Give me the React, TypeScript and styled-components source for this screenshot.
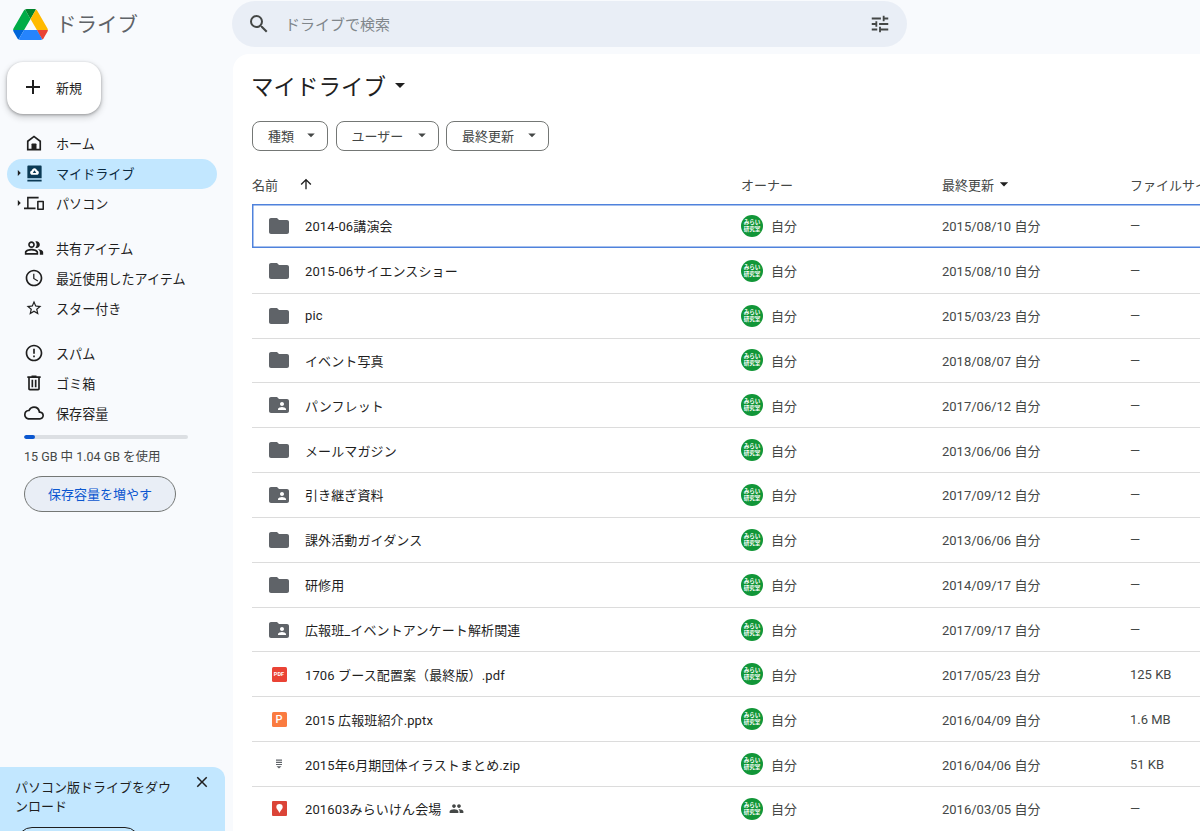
import React from "react";
import styled, { createGlobalStyle } from "styled-components";
import {
  MdAccessTime,
  MdAdd,
  MdArrowDropDown,
  MdArrowRight,
  MdArrowUpward,
  MdClose,
  MdErrorOutline,
  MdFolder,
  MdFolderShared,
  MdOutlineCloud,
  MdOutlinePeopleAlt,
  MdPeople,
  MdSearch,
  MdStarBorder,
  MdTune,
} from "react-icons/md";

const GlobalStyle = createGlobalStyle`
  html, body {
    margin: 0;
    padding: 0;
    background: #f8fafd;
  }
  body {
    font-family: Roboto, "Noto Sans CJK JP", sans-serif;
    color: #1f1f1f;
  }
`;

const DriveLogo = () => (
  <svg width="35" height="31" viewBox="0 0 87.3 78">
    <path d="m6.6 66.85 3.85 6.65c.8 1.4 1.95 2.5 3.3 3.3l13.75-23.8h-27.5c0 1.55.4 3.1 1.2 4.5z" fill="#0066da" />
    <path d="m43.65 25-13.75-23.8c-1.35.8-2.5 1.9-3.3 3.3l-25.4 44a9.06 9.06 0 0 0 -1.2 4.5h27.5z" fill="#00ac47" />
    <path d="m73.55 76.8c1.35-.8 2.5-1.9 3.3-3.3l1.6-2.75 7.65-13.25c.8-1.4 1.2-2.95 1.2-4.5h-27.502l5.852 11.5z" fill="#ea4335" />
    <path d="m43.65 25 13.75-23.8c-1.35-.8-2.9-1.2-4.5-1.2h-18.5c-1.6 0-3.15.45-4.5 1.2z" fill="#00832d" />
    <path d="m59.8 53h-32.3l-13.75 23.8c1.35.8 2.9 1.2 4.5 1.2h50.8c1.6 0 3.15-.45 4.5-1.2z" fill="#2684fc" />
    <path d="m73.4 26.5-12.7-22c-.8-1.4-1.95-2.5-3.3-3.3l-13.75 23.8 16.15 28h27.45c0-1.55-.4-3.1-1.2-4.5z" fill="#ffba00" />
  </svg>
);

const HomeIcon = () => (
  <svg width="20" height="20" viewBox="0 0 24 24" fill="#1f1f1f">
    <path fillRule="evenodd" d="M12 3 3.500 9.400V21h17V9.400L12 3zm0 2.500 6.500 4.900V19h-13v-8.600L12 5.500z" />
    <path d="M9 13.500a1 1 0 0 1 1-1h4a1 1 0 0 1 1 1V20H9z" />
  </svg>
);

const MyDriveIcon = () => (
  <svg width="19" height="19" viewBox="0 0 24 24" fill="#0b3a55">
    <path d="M4 2h16a1 1 0 0 1 1 1v15H3V3a1 1 0 0 1 1-1zm-1 18h18v2H3z" />
    <path d="M12 5.500c-1.800 0-3 1.200-3.200 2.800C7.300 8.600 6.500 9.700 6.500 11c0 1.500 1.200 2.700 2.700 2.700h5.600c1.500 0 2.700-1.200 2.700-2.700 0-1.300-.8-2.400-2.300-2.700C14.500 6.700 13.800 5.500 12 5.500z" fill="#fff" />
    <path d="M12 7.800 9.800 11.500h4.400z" fill="#0b3a55" />
  </svg>
);

const ComputerIcon = () => (
  <svg width="20" height="18" viewBox="0 0 26 22" fill="#1f1f1f">
    <path d="M4 3h15v2H6v12h9v2H0v-2h4V3z" />
    <path d="M18 8h7a1 1 0 0 1 1 1v10a1 1 0 0 1-1 1h-7a1 1 0 0 1-1-1V9a1 1 0 0 1 1-1zm1 2v8h5v-8h-5z" />
  </svg>
);

const TrashIcon = () => (
  <svg width="20" height="20" viewBox="0 0 24 24" fill="#1f1f1f">
    <path d="M7 21q-.825 0-1.412-.587Q5 19.825 5 19V6H4V4h5V3h6v1h5v2h-1v13q0 .825-.587 1.413Q17.825 21 17 21ZM17 6H7v13h10ZM9 17h2V8H9Zm4 0h2V8h-2Z" />
  </svg>
);

const ZipIcon = () => (
  <svg width="18" height="18" viewBox="0 0 18 18" fill="#5f6368">
    <path d="M6 4.500h6v1.200H6zM6 6.700h6v1.200H6zM6 8.900h6v1.200H6zM6.500 11.200h5L9 13.600z" />
  </svg>
);

const MapIcon = () => (
  <svg width="15" height="15" viewBox="0 0 15 15">
    <rect width="15" height="15" rx="1" fill="#db4437" />
    <path d="M7.500 3A3.200 3.200 0 0 0 4.300 6.200c0 2 2.200 3 3.200 5.800 1-2.800 3.200-3.800 3.200-5.800A3.200 3.200 0 0 0 7.500 3z" fill="#fff" />
  </svg>
);

type FileKind = "folder" | "shared" | "pdf" | "pptx" | "zip" | "map";

type DriveFile = {
  name: string;
  kind: FileKind;
  date: string;
  size: string;
  isShared?: boolean;
};

const files: DriveFile[] = [
  { name: "2014-06講演会", kind: "folder", date: "2015/08/10 自分", size: "—" },
  { name: "2015-06サイエンスショー", kind: "folder", date: "2015/08/10 自分", size: "—" },
  { name: "pic", kind: "folder", date: "2015/03/23 自分", size: "—" },
  { name: "イベント写真", kind: "folder", date: "2018/08/07 自分", size: "—" },
  { name: "パンフレット", kind: "shared", date: "2017/06/12 自分", size: "—" },
  { name: "メールマガジン", kind: "folder", date: "2013/06/06 自分", size: "—" },
  { name: "引き継ぎ資料", kind: "shared", date: "2017/09/12 自分", size: "—" },
  { name: "課外活動ガイダンス", kind: "folder", date: "2013/06/06 自分", size: "—" },
  { name: "研修用", kind: "folder", date: "2014/09/17 自分", size: "—" },
  { name: "広報班_イベントアンケート解析関連", kind: "shared", date: "2017/09/17 自分", size: "—" },
  { name: "1706 ブース配置案（最終版）.pdf", kind: "pdf", date: "2017/05/23 自分", size: "125 KB" },
  { name: "2015 広報班紹介.pptx", kind: "pptx", date: "2016/04/09 自分", size: "1.6 MB" },
  { name: "2015年6月期団体イラストまとめ.zip", kind: "zip", date: "2016/04/06 自分", size: "51 KB" },
  { name: "201603みらいけん会場", kind: "map", date: "2016/03/05 自分", size: "—", isShared: true },
];

const FileIcon = ({ kind }: { kind: FileKind }) => {
  switch (kind) {
    case "folder":
      return <MdFolder size={24} color="#5f6368" />;
    case "shared":
      return <MdFolderShared size={24} color="#5f6368" />;
    case "pdf":
      return <PdfBadge>PDF</PdfBadge>;
    case "pptx":
      return <PptBadge>P</PptBadge>;
    case "zip":
      return <ZipIcon />;
    default:
      return <MapIcon />;
  }
};

const App = () => {
  return (
    <Page>
      <GlobalStyle />
      <Header>
        <Brand>
          <DriveLogo />
          <BrandName>ドライブ</BrandName>
        </Brand>
        <SearchBar>
          <MdSearch size={24} color="#444746" />
          <SearchText>ドライブで検索</SearchText>
          <MdTune size={22} color="#444746" />
        </SearchBar>
      </Header>
      <Body>
        <Sidebar>
          <NewButton>
            <MdAdd size={24} color="#1f1f1f" />
            <span>新規</span>
          </NewButton>
          <NavGroup>
            <NavItem>
              <NavIcon><HomeIcon /></NavIcon>
              ホーム
            </NavItem>
            <NavItem $active>
              <Expander><MdArrowRight size={14} /></Expander>
              <NavIcon><MyDriveIcon /></NavIcon>
              マイドライブ
            </NavItem>
            <NavItem>
              <Expander><MdArrowRight size={14} /></Expander>
              <NavIcon><ComputerIcon /></NavIcon>
              パソコン
            </NavItem>
          </NavGroup>
          <NavGroup>
            <NavItem>
              <NavIcon><MdOutlinePeopleAlt size={20} /></NavIcon>
              共有アイテム
            </NavItem>
            <NavItem>
              <NavIcon><MdAccessTime size={20} /></NavIcon>
              最近使用したアイテム
            </NavItem>
            <NavItem>
              <NavIcon><MdStarBorder size={18} /></NavIcon>
              スター付き
            </NavItem>
          </NavGroup>
          <NavGroup>
            <NavItem>
              <NavIcon><MdErrorOutline size={20} /></NavIcon>
              スパム
            </NavItem>
            <NavItem>
              <NavIcon><TrashIcon /></NavIcon>
              ゴミ箱
            </NavItem>
            <NavItem>
              <NavIcon><MdOutlineCloud size={20} /></NavIcon>
              保存容量
            </NavItem>
          </NavGroup>
          <Storage>
            <StorageBar>
              <StorageUsed style={{ width: `${(1.04 / 15) * 100}%` }} />
            </StorageBar>
            <StorageText>15 GB 中 1.04 GB を使用</StorageText>
            <StorageButton>保存容量を増やす</StorageButton>
          </Storage>
          <PromoCard>
            <PromoText>パソコン版ドライブをダウンロード</PromoText>
            <PromoClose><MdClose size={18} /></PromoClose>
            <PromoButton />
          </PromoCard>
        </Sidebar>
        <Main>
          <TitleRow>
            マイドライブ
            <MdArrowDropDown size={24} color="#1f1f1f" />
          </TitleRow>
          <Filters>
            <FilterChip $width={76}>種類<MdArrowDropDown size={18} color="#444746" /></FilterChip>
            <FilterChip $width={103}>ユーザー<MdArrowDropDown size={18} color="#444746" /></FilterChip>
            <FilterChip $width={103}>最終更新<MdArrowDropDown size={18} color="#444746" /></FilterChip>
          </Filters>
          <HeadRow>
            <HeadName>
              名前
              <MdArrowUpward size={16} color="#1f1f1f" />
            </HeadName>
            <span>オーナー</span>
            <HeadDate>
              最終更新
              <MdArrowDropDown size={20} color="#1f1f1f" />
            </HeadDate>
            <span>ファイルサイズ</span>
          </HeadRow>
          <FileList>
            {files.map((file, index) => (
              <FileRow key={file.name} $selected={index === 0}>
                <NameCell>
                  <IconSlot><FileIcon kind={file.kind} /></IconSlot>
                  <FileName>{file.name}</FileName>
                  {file.isShared && <MdPeople size={15} color="#444746" />}
                </NameCell>
                <OwnerCell>
                  <Avatar>みらい<br />研究室</Avatar>
                  自分
                </OwnerCell>
                <MetaCell>{file.date}</MetaCell>
                <MetaCell>{file.size}</MetaCell>
              </FileRow>
            ))}
          </FileList>
        </Main>
      </Body>
    </Page>
  );
};

const Page = styled.div`
  width: 1200px;
  height: 831px;
  overflow: hidden;
  display: flex;
  flex-direction: column;
  background: #f8fafd;
`;

const Header = styled.header`
  height: 54px;
  flex: none;
  display: flex;
  align-items: flex-start;
`;

const Brand = styled.div`
  width: 232px;
  padding: 8px 0 0 13px;
  box-sizing: border-box;
  display: flex;
  align-items: center;
  gap: 8px;
`;

const BrandName = styled.span`
  padding-bottom: 2px;
  font-size: 20.500px;
  color: #5f6368;
`;

const SearchBar = styled.div`
  width: 675px;
  height: 46px;
  margin-top: 1px;
  padding: 0 16px 0 15px;
  box-sizing: border-box;
  border-radius: 23px;
  background: #e9eef6;
  display: flex;
  align-items: center;
`;

const SearchText = styled.span`
  flex: 1;
  margin-left: 14px;
  padding-bottom: 2px;
  font-size: 15px;
  color: #80868b;
`;

const Body = styled.div`
  flex: 1;
  min-height: 0;
  display: flex;
`;

const Sidebar = styled.aside`
  width: 233px;
  flex: none;
  display: flex;
  flex-direction: column;
`;

const NewButton = styled.button`
  width: 94px;
  height: 52px;
  margin: 8px 0 0 7px;
  padding: 0 0 2px 14px;
  border: none;
  border-radius: 16px;
  background: #fff;
  box-shadow: 0 1px 3px rgba(0, 0, 0, 0.3), 0 3px 6px 1px rgba(0, 0, 0, 0.15);
  display: flex;
  align-items: center;
  gap: 11px;
  font-family: inherit;
  font-size: 13px;
  color: #1f1f1f;
`;

const NavGroup = styled.nav`
  display: flex;
  flex-direction: column;
  margin-bottom: 15px;
  &:first-of-type {
    margin-top: 15px;
  }
`;

const NavItem = styled.div<{ $active?: boolean }>`
  position: relative;
  width: 210px;
  height: 30px;
  margin-left: 7px;
  padding: 0 0 2px 17px;
  box-sizing: border-box;
  border-radius: 15px;
  display: flex;
  align-items: center;
  gap: 12px;
  font-size: 13.100px;
  font-weight: 400;
  color: ${(p) => (p.$active ? "#0b2a3f" : "#1f1f1f")};
  background: ${(p) => (p.$active ? "#c2e7ff" : "transparent")};
`;

const Expander = styled.span`
  position: absolute;
  left: 5px;
  top: 7px;
  display: flex;
  color: #1f1f1f;
`;

const NavIcon = styled.span`
  width: 20px;
  height: 20px;
  display: flex;
  align-items: center;
  justify-content: center;
  color: #1f1f1f;
`;

const Storage = styled.div`
  margin: -9px 0 0 24px;
  display: flex;
  flex-direction: column;
  align-items: flex-start;
`;

const StorageBar = styled.div`
  width: 164px;
  height: 4px;
  border-radius: 2px;
  background: #dcdfe3;
  overflow: hidden;
`;

const StorageUsed = styled.div`
  height: 100%;
  border-radius: 2px;
  background: #0b57d0;
`;

const StorageText = styled.div`
  margin-top: 9px;
  font-size: 12.500px;
  line-height: 18px;
  color: #444746;
`;

const StorageButton = styled.button`
  width: 152px;
  height: 36px;
  margin-top: 10px;
  padding: 0 0 2px;
  border: 1px solid #747775;
  border-radius: 18px;
  background: #e9eef6;
  font-family: inherit;
  font-size: 13px;
  color: #0b57d0;
`;

const PromoCard = styled.div`
  position: relative;
  width: 225px;
  height: 64px;
  flex: none;
  margin-top: auto;
  padding: 11px 50px 0 15px;
  box-sizing: border-box;
  border-radius: 0 12px 0 0;
  background: #c2e7ff;
  overflow: hidden;
`;

const PromoText = styled.div`
  font-size: 13px;
  line-height: 19px;
  color: #1f1f1f;
`;

const PromoClose = styled.span`
  position: absolute;
  top: 6px;
  right: 14px;
  display: flex;
  color: #1f1f1f;
`;

const PromoButton = styled.div`
  position: absolute;
  left: 17px;
  top: 60px;
  width: 123px;
  height: 30px;
  box-sizing: border-box;
  border: 1px solid #1f1f1f;
  border-radius: 15px;
`;

const Main = styled.main`
  flex: 1;
  min-width: 0;
  padding-left: 19px;
  border-radius: 16px 0 0 0;
  background: #fff;
  overflow: hidden;
`;

const TitleRow = styled.h1`
  height: 32px;
  margin: 15px 0 0 -1px;
  display: flex;
  align-items: center;
  gap: 2px;
  font-size: 22.500px;
  font-weight: 400;
  color: #1f1f1f;
`;

const Filters = styled.div`
  margin-top: 20px;
  display: flex;
  gap: 7.500px;
`;

const FilterChip = styled.button<{ $width: number }>`
  width: ${(p) => p.$width}px;
  height: 30px;
  padding: 0 7px 2px 15px;
  box-sizing: border-box;
  border: 1px solid #747775;
  border-radius: 8px;
  background: #fff;
  display: flex;
  align-items: center;
  justify-content: space-between;
  font-family: inherit;
  font-size: 13px;
  color: #444746;
`;

const columns = "489px 201px 188px 300px";

const HeadRow = styled.div`
  height: 53px;
  padding-top: 13px;
  box-sizing: border-box;
  display: grid;
  grid-template-columns: ${columns};
  align-items: center;
  font-size: 13px;
  color: #444746;
  white-space: nowrap;
`;

const HeadName = styled.div`
  display: flex;
  align-items: center;
  gap: 20px;
`;

const HeadDate = styled.div`
  display: flex;
  align-items: center;
`;

const FileList = styled.div`
  width: 1178px;
`;

const FileRow = styled.div<{ $selected?: boolean }>`
  height: 44.850px;
  box-sizing: border-box;
  display: grid;
  grid-template-columns: ${columns};
  align-items: center;
  border-bottom: 1px solid ${(p) => (p.$selected ? "transparent" : "#dcdcdc")};
  ${(p) => (p.$selected ? "box-shadow: inset 0 0 0 1.5px #4f82dc;" : "")}
`;

const NameCell = styled.div`
  display: flex;
  align-items: center;
  font-size: 13px;
  letter-spacing: 0.120px;
  color: #1f1f1f;
`;

const IconSlot = styled.span`
  width: 24px;
  height: 24px;
  margin: 0 14px 0 15px;
  display: flex;
  align-items: center;
  justify-content: center;
`;

const FileName = styled.span`
  margin-right: 8px;
  white-space: nowrap;
`;

const PdfBadge = styled.span`
  width: 15px;
  height: 15px;
  border-radius: 1.500px;
  background: #ea4335;
  color: #fff;
  font-size: 5.500px;
  font-weight: 700;
  line-height: 15px;
  text-align: center;
`;

const PptBadge = styled.span`
  width: 15px;
  height: 15px;
  border-radius: 1.500px;
  background: #fa7b40;
  color: #fff;
  font-size: 11px;
  font-weight: 500;
  line-height: 15px;
  text-align: center;
`;

const OwnerCell = styled.div`
  display: flex;
  align-items: center;
  gap: 8px;
  font-size: 13px;
  color: #444746;
`;

const Avatar = styled.span`
  width: 22px;
  height: 22px;
  border-radius: 50%;
  background: #119638;
  color: #fff;
  font-size: 5.500px;
  font-weight: 700;
  line-height: 7px;
  text-align: center;
  display: flex;
  align-items: center;
  justify-content: center;
  white-space: nowrap;
`;

const MetaCell = styled.div`
  font-size: 13px;
  color: #444746;
  white-space: nowrap;
`;

export default App;
